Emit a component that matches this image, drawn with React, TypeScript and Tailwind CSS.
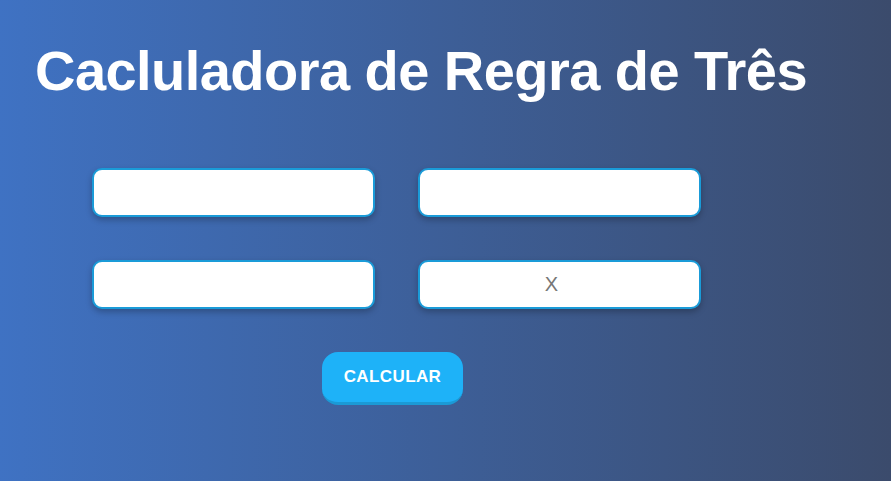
import React from "react";

export default function App() {
  const inputCls =
    "w-[283px] h-[49px] rounded-[10px] border-2 border-[#1a9bd8] bg-white shadow-[0_3px_6px_rgba(0,0,0,0.25)] text-center text-[20px] text-[#777] placeholder:text-[#777] outline-none";
  return (
    <div
      className="w-[891px] h-[481px] overflow-hidden bg-[linear-gradient(to_right,#3f72c3,#3b4b6c)]"
      style={{ fontFamily: '"Liberation Sans", Arial, sans-serif' }}
    >
      <h1 className="pl-[35px] pt-[43px] text-[56px] font-bold leading-[56px] tracking-[-0.55px] text-white whitespace-nowrap">
        Cacluladora de Regra de Três
      </h1>
      <div className="pl-[92px] pt-[69px] grid grid-cols-[283px_283px] gap-x-[43px] gap-y-[43px]">
        <input className={inputCls} />
        <input className={inputCls} />
        <input className={inputCls} />
        <input className={inputCls + " pr-4"} placeholder="X" />
      </div>
      <div className="pl-[322px] pt-[43px]">
        <button className="w-[141px] h-[53px] rounded-[16px] bg-[#1eb2f8] border-b-[3px] border-[#1b9ad6] text-white font-bold text-[17px] tracking-[0.4px]">
          CALCULAR
        </button>
      </div>
    </div>
  );
}
